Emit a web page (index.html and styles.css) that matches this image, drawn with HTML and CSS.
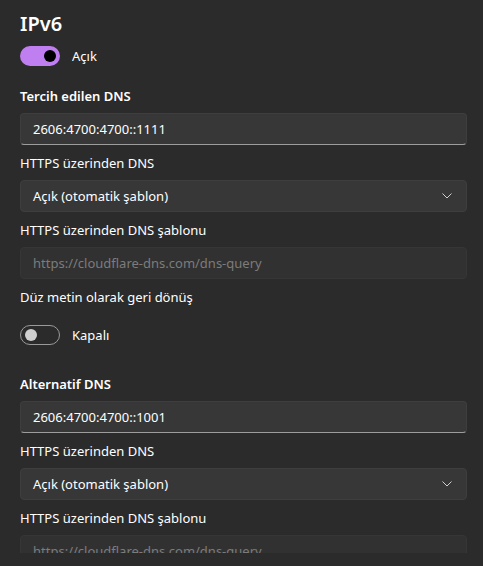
FILE: index.html
```html
<!DOCTYPE html>
<html>
  <head>
    <meta name="viewport" content="width=device-width, initial-scale=1.0" />
    <link rel="stylesheet" href="styles.css">
  </head>
  <body>
    <div class="dialog">
      <div class="scroll">
        <h1 class="title">IPv6</h1>
        <div class="toggle-row">
          <span class="toggle on"><span class="knob"></span></span>
          <span class="toggle-text">Açık</span>
        </div>

        <section class="group">
          <div class="field">
            <div class="label strong">Tercih edilen DNS</div>
            <div class="input">2606:4700:4700::1111</div>
          </div>
          <div class="field">
            <div class="label">HTTPS üzerinden DNS</div>
            <div class="input select">
              <span>Açık (otomatik şablon)</span>
              <svg class="chevron" width="10" height="6" viewBox="0 0 10 6"><path d="M0.5 0.5 L5 5 L9.5 0.5" fill="none" stroke="#cfcfcf" stroke-width="1"/></svg>
            </div>
          </div>
          <div class="field">
            <div class="label">HTTPS üzerinden DNS şablonu</div>
            <div class="input disabled">https://cloudflare-dns.com/dns-query</div>
          </div>
          <div class="field">
            <div class="label">Düz metin olarak geri dönüş</div>
          </div>
          <div class="toggle-row off-row">
            <span class="toggle off"><span class="knob"></span></span>
            <span class="toggle-text">Kapalı</span>
          </div>
        </section>

        <section class="group second">
          <div class="field">
            <div class="label strong">Alternatif DNS</div>
            <div class="input">2606:4700:4700::1001</div>
          </div>
          <div class="field">
            <div class="label">HTTPS üzerinden DNS</div>
            <div class="input select">
              <span>Açık (otomatik şablon)</span>
              <svg class="chevron" width="10" height="6" viewBox="0 0 10 6"><path d="M0.5 0.5 L5 5 L9.5 0.5" fill="none" stroke="#cfcfcf" stroke-width="1"/></svg>
            </div>
          </div>
          <div class="field">
            <div class="label">HTTPS üzerinden DNS şablonu</div>
            <div class="input disabled">https://cloudflare-dns.com/dns-query</div>
          </div>
        </section>
      </div>
    </div>
  </body>
</html>
```

FILE: styles.css
```css
:root {
  --background: #2b2b2b;
  --control: #373737;
  --control-border: #3e3e3e;
  --control-line: #9d9d9d;
  --disabled: #313131;
  --text: #ffffff;
  --text-muted: #7c7c7c;
  --accent: #c07ff0;
}

* {
  box-sizing: border-box;
  margin: 0;
  padding: 0;
}

html,
body {
  background: var(--background);
  height: 100%;
}

body {
  color: var(--text);
  font-family: "Noto Sans", "Open Sans", sans-serif;
  font-size: 13px;
  line-height: 20px;
  overflow: hidden;
}

.dialog {
  height: 566px;
}

.scroll {
  height: 553px;
  overflow: hidden;
  padding: 12px 16px 0 20px;
}

/* Title */
.title {
  font-size: 20px;
  font-weight: 600;
  line-height: 24px;
  height: 24px;
}

/* Toggle */
.toggle-row {
  display: flex;
  align-items: center;
  gap: 12px;
  margin-top: 10px;
  height: 20px;
}

.toggle {
  width: 40px;
  height: 20px;
  border-radius: 10px;
  display: flex;
  align-items: center;
  flex-shrink: 0;
}

.toggle.on {
  background: var(--accent);
  justify-content: flex-end;
  padding-right: 4px;
}

.toggle.on .knob {
  width: 12px;
  height: 12px;
  border-radius: 50%;
  background: #000;
}

.toggle.off {
  border: 1px solid #9a9a9a;
  padding-left: 4px;
}

.toggle.off .knob {
  width: 12px;
  height: 12px;
  border-radius: 50%;
  background: #d0d0d0;
}

.off-row {
  margin-top: 10px;
}

/* Fields */
.group {
  margin-top: 20px;
  display: flex;
  flex-direction: column;
  gap: 8px;
}

.group.second {
  margin-top: 29px;
}

.field {
  display: flex;
  flex-direction: column;
  gap: 7px;
}

.label {
  height: 20px;
}

.label.strong {
  font-weight: 600;
}

.input {
  height: 32px;
  background: var(--control);
  border: 1px solid var(--control-border);
  border-bottom: 1px solid var(--control-line);
  border-radius: 4px;
  padding: 0 12px;
  display: flex;
  align-items: center;
}

.input.select {
  border-bottom-color: var(--control-border);
  justify-content: space-between;
  padding-right: 14px;
}

.input.disabled {
  background: var(--disabled);
  border-color: #363636;
  color: var(--text-muted);
}
```
